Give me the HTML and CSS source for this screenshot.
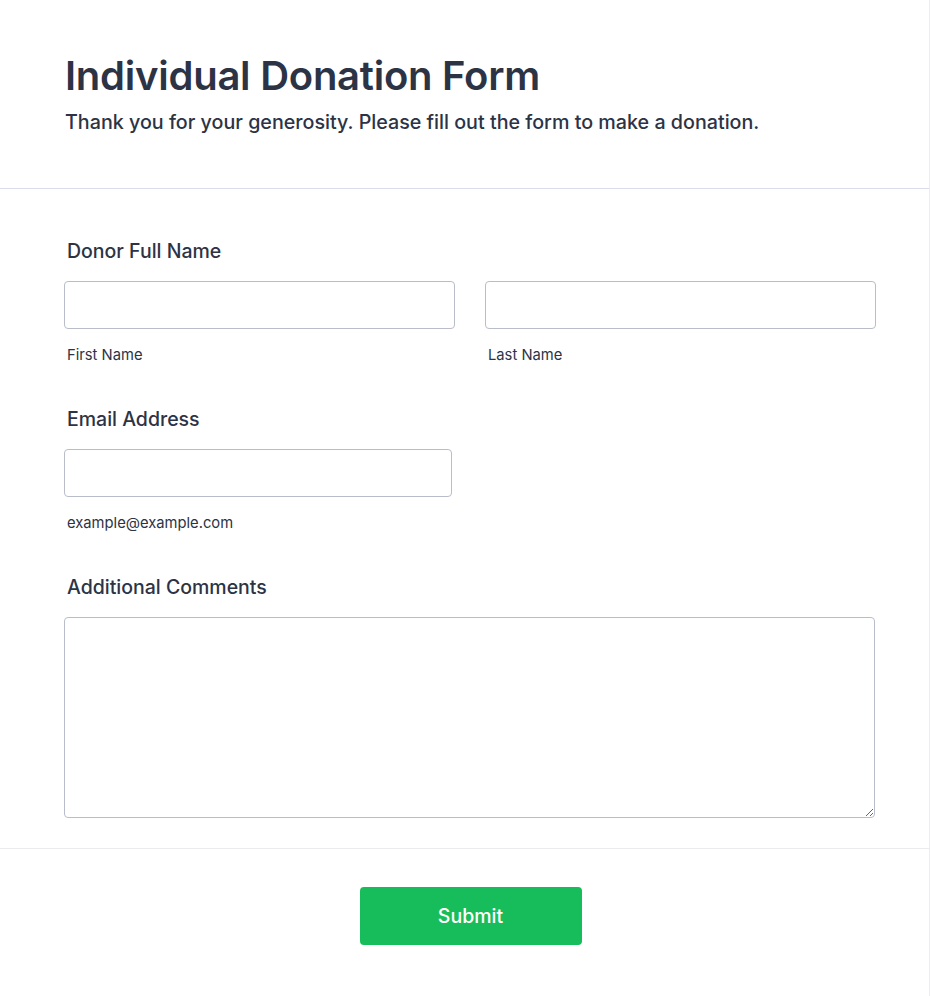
FILE: index.html
```html
<!DOCTYPE html>
<html lang="en">
<head>
<meta charset="utf-8">
<title>Individual Donation Form</title>
<link rel="stylesheet" href="styles.css">
</head>
<body>
<form class="card">
  <header class="form-header">
    <h1 class="form-title">Individual Donation Form</h1>
    <p class="form-subtitle">Thank you for your generosity. Please fill out the form to make a donation.</p>
  </header>
  <section class="form-body">
    <div class="field">
      <label class="field-label">Donor Full Name</label>
      <div class="name-row">
        <div class="sub-field">
          <input class="text-input" type="text">
          <span class="sub-label">First Name</span>
        </div>
        <div class="sub-field">
          <input class="text-input" type="text">
          <span class="sub-label">Last Name</span>
        </div>
      </div>
    </div>
    <div class="field">
      <label class="field-label">Email Address</label>
      <div class="sub-field email">
        <input class="text-input" type="email">
        <span class="sub-label">example@example.com</span>
      </div>
    </div>
    <div class="field">
      <label class="field-label">Additional Comments</label>
      <textarea class="text-area"></textarea>
    </div>
  </section>
  <footer class="form-footer">
    <button class="submit-btn" type="button">Submit</button>
  </footer>
</form>
</body>
</html>
```

FILE: styles.css
```css
* { box-sizing: border-box; }
html, body { margin: 0; padding: 0; background: #fff; }
body {
  font-family: Inter, "Noto Sans", sans-serif;
  color: #2c3345;
  width: 930px;
  height: 996px;
}
.card {
  width: 930px;
  height: 996px;
  border-right: 1px solid #ececf1;
  background: #fff;
}
.form-header {
  padding: 52px 64px 54px 65px;
  border-bottom: 1px solid #dcdcec;
}
.form-title {
  margin: 0;
  font-size: 40px;
  line-height: 48px;
  font-weight: 600;
  letter-spacing: -0.25px;
}
.form-subtitle {
  margin: 10px 0 0;
  font-size: 19.7px;
  line-height: 24px;
  font-weight: 500;
}
.form-body {
  padding: 50px 54px 30px 64px;
  display: flex;
  flex-direction: column;
  gap: 42px;
  border-bottom: 1px solid #ebebef;
}
.field-label {
  display: block;
  padding-left: 3px;
  font-size: 19.5px;
  line-height: 24px;
  font-weight: 500;
  margin-bottom: 18px;
}
.name-row {
  display: grid;
  grid-template-columns: 391px 391px;
  gap: 30px;
}
.sub-field {
  display: flex;
  flex-direction: column;
}
.sub-field.email { width: 388px; }
.text-input {
  height: 48px;
  width: 100%;
  border: 1px solid #b8bdc9;
  border-radius: 4px;
  background: #fff;
  font: inherit;
}
.sub-label {
  margin-top: 16px;
  padding-left: 3px;
  font-size: 14.75px;
  line-height: 20px;
}
.text-area {
  display: block;
  width: 811px;
  height: 201px;
  border: 1px solid #b8bdc9;
  border-radius: 4px;
  background: #fff;
  font: inherit;
}
.form-footer {
  display: flex;
  justify-content: center;
  padding-top: 38px;
  padding-left: 12px;
}
.submit-btn {
  width: 222px;
  height: 58px;
  border: none;
  border-radius: 4px;
  background: #18bd5b;
  color: #fff;
  font-family: Inter, "Noto Sans", sans-serif;
  font-size: 19.5px;
  font-weight: 500;
}
```
